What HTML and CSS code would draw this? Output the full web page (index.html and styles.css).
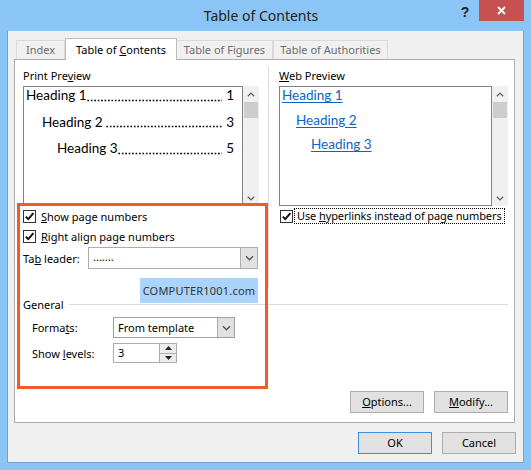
FILE: index.html
```html
<!DOCTYPE html>
<html>
<head>
<meta charset="utf-8">
<link rel="stylesheet" href="styles.css">
</head>
<body>
<div class="window">
  <div class="titlebar">
    <div class="title">Table of Contents</div>
    <div class="help">?</div>
    <div class="close"><svg width="9" height="9" viewBox="0 0 9 9"><path d="M1 1L8 8M8 1L1 8" stroke="#fff" stroke-width="1.8"/></svg></div>
  </div>
  <div class="client">
    <div class="tabs">
      <div class="tab t-index">Index</div>
      <div class="tab active t-toc">Table of <u>C</u>ontents</div>
      <div class="tab t-fig">Table of Figures</div>
      <div class="tab t-auth">Table of Authorities</div>
    </div>
    <div class="panel">
      <div class="top">
        <div class="col left">
          <div class="label">Print Pre<u>v</u>iew</div>
          <div class="box box-left">
            <div class="list print">
              <div class="pl"><span>Heading 1</span><span class="dots"></span><span class="num">1</span></div>
              <div class="pl in2"><span>Heading 2</span><span class="dots sp"></span><span class="num">3</span></div>
              <div class="pl in3"><span>Heading 3</span><span class="dots"></span><span class="num">5</span></div>
            </div>
            <div class="scroll">
              <div class="arrow"><svg width="8" height="5" viewBox="0 0 8 5"><path d="M0.8 4.3L4 1.1L7.2 4.3" fill="none" stroke="#606060" stroke-width="1.3"/></svg></div>
              <div class="thumb"></div>
              <div class="track"></div>
              <div class="arrow"><svg width="8" height="5" viewBox="0 0 8 5"><path d="M0.8 0.7L4 3.9L7.2 0.7" fill="none" stroke="#606060" stroke-width="1.3"/></svg></div>
            </div>
          </div>
          <div class="check c1"><span class="cb"><svg width="11" height="11" viewBox="0 0 11 11"><path d="M1.8 5.6L4.3 8.1L9.4 2.2" fill="none" stroke="#111" stroke-width="2"/></svg></span><span><u>S</u>how page numbers</span></div>
          <div class="check c2"><span class="cb"><svg width="11" height="11" viewBox="0 0 11 11"><path d="M1.8 5.6L4.3 8.1L9.4 2.2" fill="none" stroke="#111" stroke-width="2"/></svg></span><span><u>R</u>ight align page numbers</span></div>
          <div class="field">
            <span class="flabel">Ta<u>b</u> leader:</span>
            <div class="select sel-leader">
              <span class="sel-text">.......</span>
              <span class="sel-btn"><svg width="9" height="6" viewBox="0 0 9 6"><path d="M1 1.2L4.5 4.7L8 1.2" fill="none" stroke="#555" stroke-width="1.4"/></svg></span>
            </div>
          </div>
        </div>
        <div class="col right">
          <div class="label"><u>W</u>eb Preview</div>
          <div class="box box-right">
            <div class="list web">
              <div class="wl"><span class="link">Heading 1</span></div>
              <div class="wl in2w"><span class="link">Heading 2</span></div>
              <div class="wl in3w"><span class="link">Heading 3</span></div>
            </div>
            <div class="scroll">
              <div class="arrow"><svg width="8" height="5" viewBox="0 0 8 5"><path d="M0.8 4.3L4 1.1L7.2 4.3" fill="none" stroke="#606060" stroke-width="1.3"/></svg></div>
              <div class="thumb"></div>
              <div class="track"></div>
              <div class="arrow"><svg width="8" height="5" viewBox="0 0 8 5"><path d="M0.8 0.7L4 3.9L7.2 0.7" fill="none" stroke="#606060" stroke-width="1.3"/></svg></div>
            </div>
          </div>
          <div class="check c1 cw"><span class="cb cbw"><svg width="11" height="11" viewBox="0 0 11 11"><path d="M1.8 5.6L4.3 8.1L9.4 2.2" fill="none" stroke="#111" stroke-width="2"/></svg></span><span class="focus">Use <u>h</u>yperlinks instead of page numbers</span></div>
        </div>
      </div>
      <div class="general"><span>General</span><span class="gline"></span></div>
      <div class="frow">
        <span class="rlabel">Forma<u>t</u>s:</span>
        <div class="select sel-format">
          <span class="sel-text">From template</span>
          <span class="sel-btn"><svg width="9" height="6" viewBox="0 0 9 6"><path d="M1 1.2L4.5 4.7L8 1.2" fill="none" stroke="#555" stroke-width="1.4"/></svg></span>
        </div>
      </div>
      <div class="frow lrow">
        <span class="rlabel">Show <u>l</u>evels:</span>
        <div class="spin">
          <span class="sel-text">3</span>
          <span class="spin-btns">
            <span class="sb"><svg width="7" height="4" viewBox="0 0 7 4"><path d="M0 4L3.5 0L7 4Z" fill="#222"/></svg></span>
            <span class="sb sb2"><svg width="7" height="4" viewBox="0 0 7 4"><path d="M0 0L3.5 4L7 0Z" fill="#222"/></svg></span>
          </span>
        </div>
      </div>
      <div class="opt">
        <div class="btn"><u>O</u>ptions...</div>
        <div class="btn"><u>M</u>odify...</div>
      </div>
      <div class="annot"></div>
      <div class="watermark">COMPUTER1001.com</div>
    </div>
    <div class="dlg-buttons">
      <div class="btn ok">OK</div>
      <div class="btn">Cancel</div>
    </div>
  </div>
</div>
</body>
</html>
```
FILE: styles.css
```css
html, body {
  margin: 0;
  padding: 0;
}
body {
  width: 531px;
  height: 470px;
  overflow: hidden;
}
.window {
  width: 531px;
  height: 470px;
  background: #8bc5f6;
  font-family: "Noto Sans", "Liberation Sans", sans-serif;
  font-size: 11px;
  color: #000;
}
u {
  text-decoration: underline;
  text-underline-offset: 1px;
}
.titlebar {
  display: flex;
  height: 31px;
  padding-left: 64px;
}
.title {
  flex: 1;
  text-align: center;
  font-size: 14px;
  line-height: 32px;
  color: #222;
}
.help {
  width: 14px;
  margin-right: 7px;
  text-align: center;
  font-weight: bold;
  font-size: 14px;
  line-height: 24px;
  color: #222;
  font-family: "Liberation Sans", sans-serif;
}
.close {
  width: 45px;
  height: 21px;
  background: #c75050;
  display: flex;
  align-items: center;
  justify-content: center;
  margin-right: 7px;
}
.client {
  margin: 0 7px;
  height: 431px;
  border: 1px solid #6fa5d6;
  border-top: none;
  background: #f0f0f0;
  display: flex;
  flex-direction: column;
}
.tabs {
  display: flex;
  align-items: flex-start;
  height: 22px;
  margin: 7px 0 -1px 6px;
  padding-left: 2px;
  position: relative;
  z-index: 1;
}
.tab {
  box-sizing: border-box;
  height: 19px;
  margin-top: 2px;
  border: 1px solid #d9d9d9;
  border-bottom: none;
  background: #f0f0f0;
  color: #6d6d6d;
  text-align: center;
  padding-top: 1px;
  line-height: 15px;
}
.t-index { width: 49px; }
.t-toc { width: 112px; }
.t-fig { width: 97px; margin-left: -1px; }
.t-auth { width: 115px; }
.tab.active {
  height: 22px;
  margin-top: 0;
  border-color: #bdbdbd;
  background: #fff;
  color: #000;
  padding-top: 3px;
  position: relative;
  z-index: 2;
}
.panel {
  position: relative;
  box-sizing: border-box;
  width: 501px;
  height: 364px;
  margin-left: 6px;
  border: 1px solid #acacac;
  background: #fff;
  display: flex;
  flex-direction: column;
}
.top {
  display: flex;
  height: 232px;
  flex: none;
}
.col {
  margin-top: 6px;
  box-sizing: border-box;
}
.col.left {
  width: 254px;
  height: 222px;
  padding-left: 8px;
  border-right: 1px solid #dcdcdc;
}
.col.right {
  padding-left: 10px;
}
.label {
  margin-top: 2px;
  height: 15px;
  line-height: 15px;
}
.box {
  display: flex;
  height: 120px;
  margin-top: 3px;
}
.box-left { width: 236px; }
.box-right { width: 229px; }
.list {
  flex: 1;
  min-width: 0;
  border: 1px solid #828282;
  background: #fff;
  font-family: Lato, "Liberation Sans", sans-serif;
  font-size: 13.5px;
}
.print {
  padding: 0 8px 0 2px;
}
.pl {
  display: flex;
  height: 17px;
  line-height: 17px;
  margin-bottom: 9.5px;
  white-space: nowrap;
}
.pl.in2 { padding-left: 16px; }
.pl.in3 { padding-left: 31px; }
.dots {
  flex: 1;
  min-width: 0;
  background-image: radial-gradient(circle at center, #111 0, #111 0.8px, rgba(0,0,0,0) 1.2px);
  background-size: 3.45px 3px;
  background-repeat: repeat-x;
  background-position: -0.5px 11.6px;
}
.dots.sp {
  margin-left: 3px;
}
.num {
  padding-left: 4px;
}
.web {
  padding-left: 2px;
}
.wl {
  height: 17px;
  line-height: 17px;
  margin-bottom: 7.5px;
}
.wl.in2w { padding-left: 14px; }
.wl.in3w { padding-left: 29px; }
.link {
  color: #0b64c6;
  text-decoration: underline;
  text-underline-offset: 2px;
}
.scroll {
  width: 16px;
  background: #f0f0f0;
  display: flex;
  flex-direction: column;
}
.arrow {
  height: 16px;
  display: flex;
  align-items: center;
  justify-content: center;
}
.thumb {
  height: 16px;
  margin: 0 1px;
  background: #cdcdcd;
}
.track {
  flex: 1;
}
.check {
  display: flex;
  align-items: center;
  height: 16px;
}
.check.c1 { margin-top: 2px; }
.check.c2 { margin-top: 4px; }
.cb {
  box-sizing: border-box;
  width: 13px;
  height: 13px;
  border: 1px solid #333;
  background: #fff;
  margin-right: 5px;
  display: flex;
}
.cbw {
  margin-left: 1px;
  margin-right: 1px;
}
.focus {
  border: 1px dotted #000;
  padding: 0 2px;
  line-height: 14px;
  white-space: nowrap;
  letter-spacing: -0.1px;
}
.field {
  display: flex;
  align-items: center;
  height: 22px;
  margin-top: 3px;
}
.flabel {
  width: 65px;
}
.select, .spin {
  box-sizing: border-box;
  display: flex;
  border: 1px solid #acacac;
  background: #fff;
}
.sel-leader {
  width: 170px;
  height: 22px;
}
.sel-format {
  width: 122px;
  height: 21px;
  border-color: #a0a0a0;
}
.sel-text {
  flex: 1;
  padding-left: 4px;
  line-height: 19px;
}
.sel-leader .sel-text { line-height: 18px; }
.sel-btn {
  width: 16px;
  background: #e1e1e1;
  border-left: 1px solid #acacac;
  display: flex;
  align-items: center;
  justify-content: center;
}
.general {
  display: flex;
  align-items: center;
  height: 15px;
  line-height: 15px;
  margin-top: 5px;
  padding-left: 8px;
}
.gline {
  flex: 1;
  height: 1px;
  background: #dcdcdc;
  margin: 0 6px 0 5px;
}
.frow {
  display: flex;
  align-items: center;
  height: 21px;
  margin-top: 5px;
  padding-left: 17px;
}
.frow.lrow {
  height: 20px;
}
.rlabel {
  width: 81px;
}
.spin {
  width: 64px;
  height: 20px;
}
.spin .sel-text { line-height: 18px; }
.spin-btns {
  width: 16px;
  display: flex;
  flex-direction: column;
  border-left: 1px solid #acacac;
  background: #ececec;
}
.sb {
  flex: 1;
  display: flex;
  align-items: center;
  justify-content: center;
}
.sb2 {
  border-top: 1px solid #acacac;
}
.opt {
  display: flex;
  justify-content: flex-end;
  gap: 10px;
  margin-top: 28px;
  padding-right: 6px;
}
.btn {
  box-sizing: border-box;
  width: 74px;
  height: 22px;
  border: 1px solid #adadad;
  background: #e1e1e1;
  text-align: center;
  line-height: 20px;
}
.btn.ok {
  border-color: #3c8fdc;
}
.dlg-buttons {
  display: flex;
  justify-content: flex-end;
  gap: 10px;
  margin-top: 9px;
  padding-right: 7px;
}
.annot {
  position: absolute;
  left: 2px;
  top: 143px;
  width: 251px;
  height: 186px;
  box-sizing: border-box;
  border: 3px solid #f15a29;
}
.watermark {
  position: absolute;
  left: 125px;
  top: 218px;
  width: 118px;
  height: 25px;
  background: #aad4fb;
  color: #333;
  text-align: center;
  line-height: 25px;
  font-size: 11px;
  letter-spacing: 0.2px;
}
```
